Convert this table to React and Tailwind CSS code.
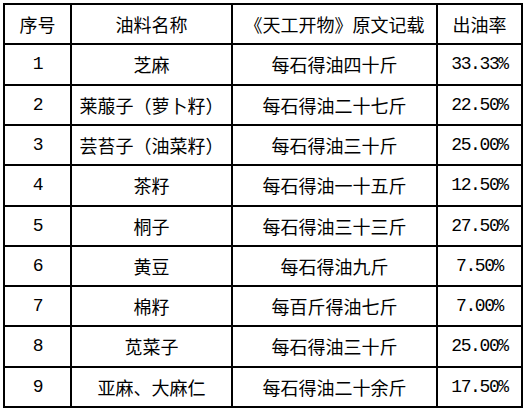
import React from "react";

const rows = [
  ["1", "芝麻", "每石得油四十斤", "33.33%"],
  ["2", "莱菔子（萝卜籽）", "每石得油二十七斤", "22.50%"],
  ["3", "芸苔子（油菜籽）", "每石得油三十斤", "25.00%"],
  ["4", "茶籽", "每石得油一十五斤", "12.50%"],
  ["5", "桐子", "每石得油三十三斤", "27.50%"],
  ["6", "黄豆", "每石得油九斤", "7.50%"],
  ["7", "棉籽", "每百斤得油七斤", "7.00%"],
  ["8", "苋菜子", "每石得油三十斤", "25.00%"],
  ["9", "亚麻、大麻仁", "每石得油二十余斤", "17.50%"],
];

const cjk = { fontFamily: '"Noto Sans CJK SC", sans-serif' };
const mono = { fontFamily: '"Liberation Mono", "Noto Sans CJK SC", monospace' };

function Cell({ children, num }) {
  return (
    <div
      className={
        "bg-white flex items-center justify-center text-black whitespace-nowrap " +
        (num ? "text-[18px] tracking-[-1.4px]" : "text-[18px]")
      }
      style={num ? mono : cjk}
    >
      {children}
    </div>
  );
}

export default function App() {
  return (
    <div className="w-[528px] h-[412px] bg-white pt-[3px] pl-[3px]">
      <div className="inline-grid grid-cols-[65px_159px_203px_83px] grid-rows-[38px_39px_38px_38px_39px_38px_38px_38px_39px_38px] gap-[2px] p-[2px] bg-black">
        <Cell>序号</Cell>
        <Cell>油料名称</Cell>
        <Cell>《天工开物》原文记载</Cell>
        <Cell>出油率</Cell>
        {rows.map((r) => (
          <React.Fragment key={r[0]}>
            <Cell num>{r[0]}</Cell>
            <Cell>{r[1]}</Cell>
            <Cell>{r[2]}</Cell>
            <Cell num>{r[3]}</Cell>
          </React.Fragment>
        ))}
      </div>
    </div>
  );
}
